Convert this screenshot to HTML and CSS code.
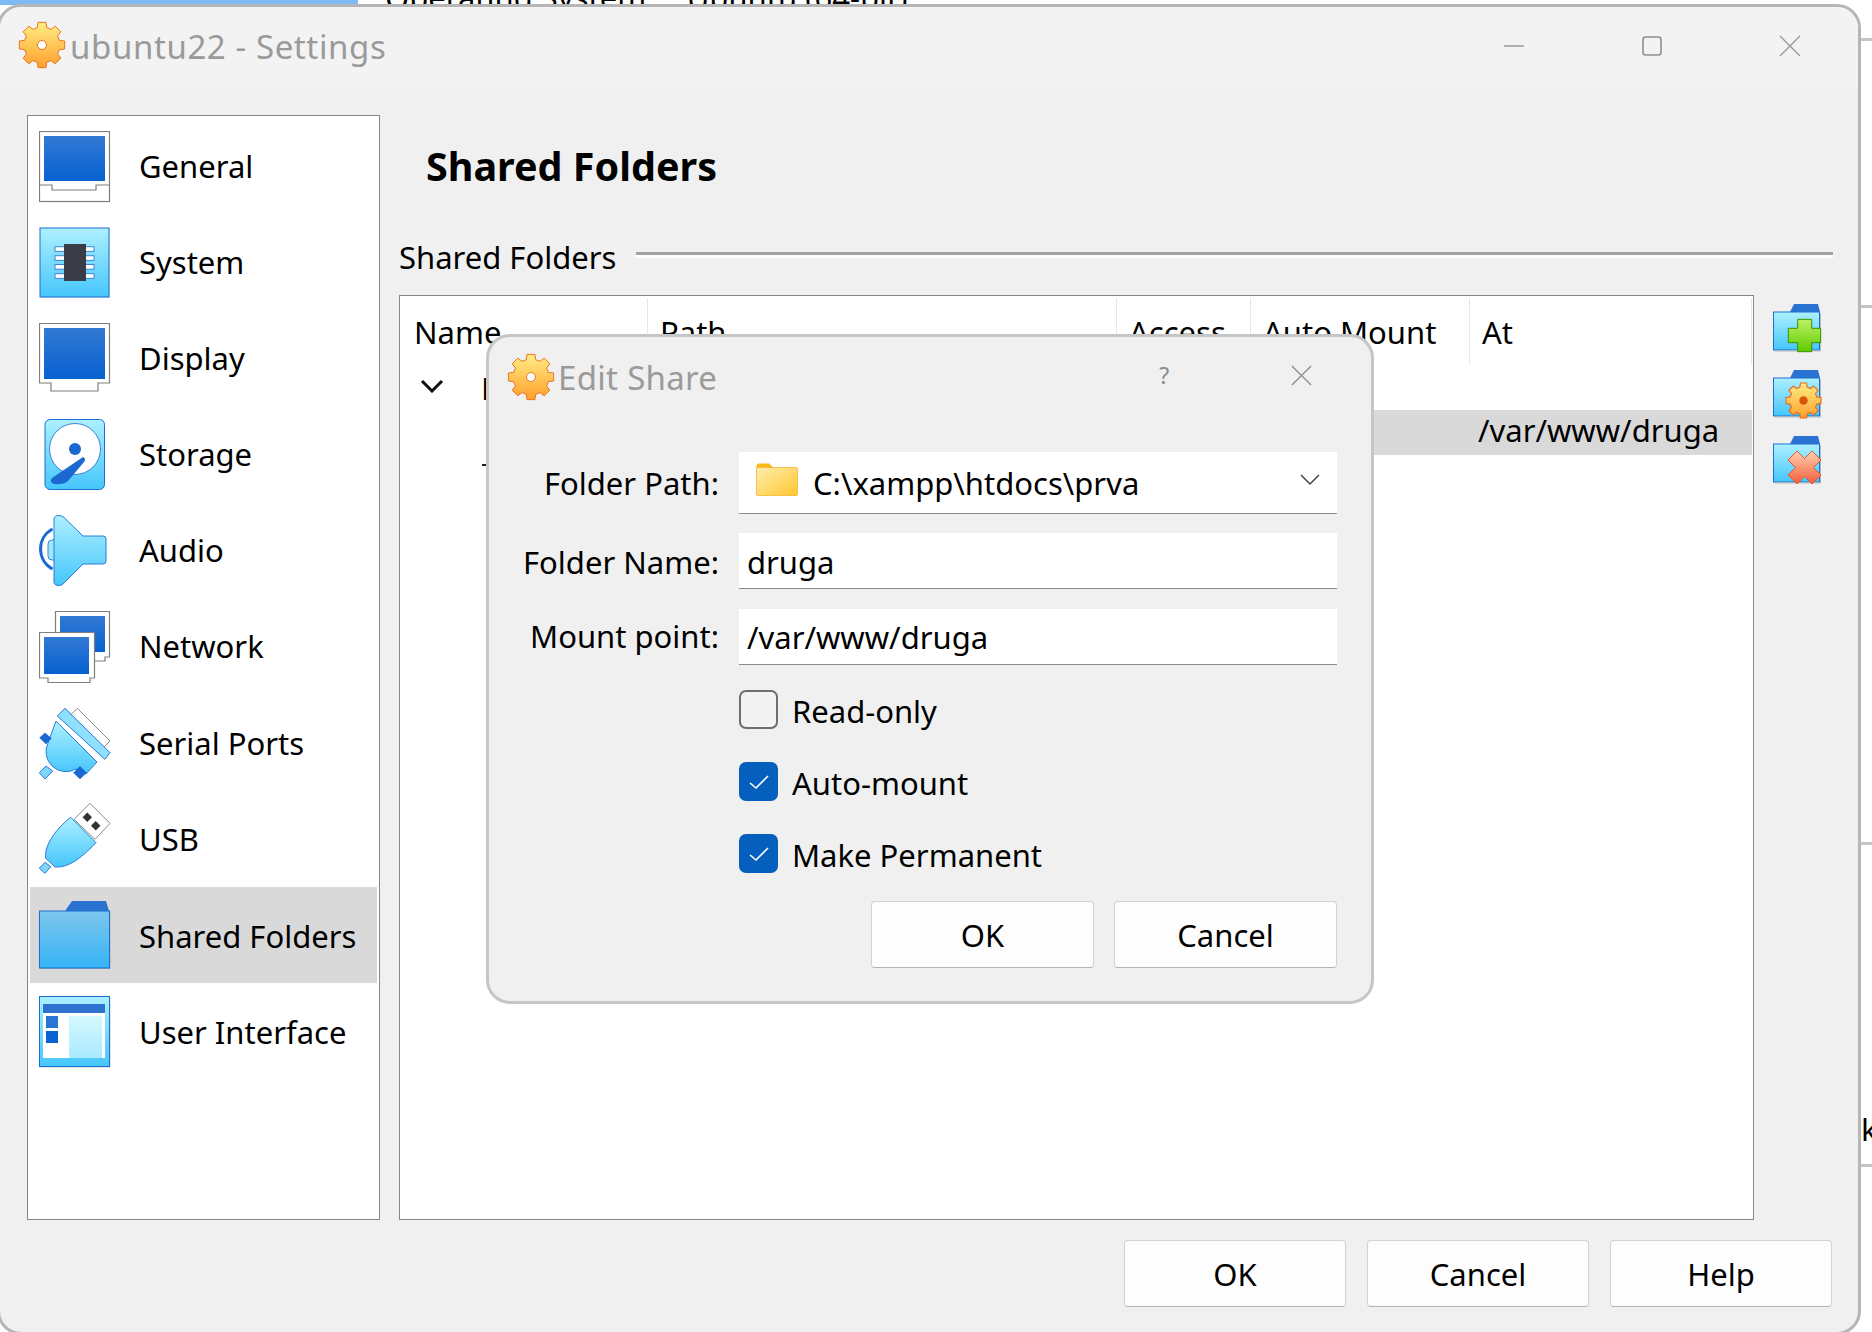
FILE: index.html
```html
<!DOCTYPE html>
<html lang="en">
<head>
<meta charset="utf-8">
<title>ubuntu22 - Settings</title>
<link rel="stylesheet" href="styles.css">
</head>
<body>
<svg class="defs" width="0" height="0" aria-hidden="true">
  <defs>
    <linearGradient id="gBlue" x1="0" y1="0" x2="0" y2="1"><stop offset="0" stop-color="#3279d4"/><stop offset="1" stop-color="#0761d1"/></linearGradient>
    <linearGradient id="gSky" x1="0" y1="0" x2="0" y2="1"><stop offset="0" stop-color="#adf0ff"/><stop offset="1" stop-color="#45c6fb"/></linearGradient>
    <linearGradient id="gFolder" x1="0" y1="0" x2="0" y2="1"><stop offset="0" stop-color="#7cc6ec"/><stop offset="1" stop-color="#36b4f6"/></linearGradient>
    <linearGradient id="gPane" x1="0" y1="0" x2="0" y2="1"><stop offset="0" stop-color="#d6f8ff"/><stop offset="1" stop-color="#a8eaff"/></linearGradient>
    <linearGradient id="gGear" x1="0" y1="0" x2="0" y2="1"><stop offset="0" stop-color="#ffee85"/><stop offset="1" stop-color="#ff9f2c"/></linearGradient>
    <linearGradient id="gPlus" x1="0" y1="0" x2="0" y2="1"><stop offset="0" stop-color="#bdf265"/><stop offset="1" stop-color="#5ecb00"/></linearGradient>
    <linearGradient id="gCross" x1="0" y1="0" x2="0" y2="1"><stop offset="0" stop-color="#ffcfb0"/><stop offset="1" stop-color="#f25f3a"/></linearGradient>
    <linearGradient id="gYellow" x1="0" y1="0" x2="1" y2="1"><stop offset="0" stop-color="#feeeb0"/><stop offset="1" stop-color="#ffc62e"/></linearGradient>
    <polygon id="gearShape" points="19.34,6.61 20.01,1.35 27.99,1.35 28.66,6.61 33,8.41 37.19,5.16 42.84,10.81 39.59,15 41.39,19.34 46.65,20.01 46.65,27.99 41.39,28.66 39.59,33 42.84,37.19 37.19,42.84 33,39.59 28.66,41.39 27.99,46.65 20.01,46.65 19.34,41.39 15,39.59 10.81,42.84 5.16,37.19 8.41,33 6.61,28.66 1.35,27.99 1.35,20.01 6.61,19.34 8.41,15 5.16,10.81 10.81,5.16 15,8.41"/>
    <g id="toolFolder">
      <path d="M17 8 L21 0 H45 L47 8 Z" fill="#2b73d3"/>
      <rect x="0.5" y="8" width="46" height="38" fill="url(#gSky)" stroke="#1a6fd0"/>
      <path d="M47.5 9 V47 H1.5" fill="none" stroke="#b9b9b9"/>
    </g>
  </defs>
</svg>

<div class="desktop">
  <div class="behind-strip"></div>
  <div class="behind-text">Operating System:&nbsp;&nbsp;&nbsp;&nbsp;Ubuntu (64-bit)</div>
  <div class="behind-line behind-line-a"></div>
  <div class="behind-line behind-line-b"></div>
  <div class="behind-line behind-line-c"></div>
  <div class="behind-line behind-line-d"></div>
  <div class="behind-k">k</div>

  <section class="window">
    <header class="titlebar">
      <svg class="title-gear" viewBox="0 0 48 48"><use href="#gearShape" fill="url(#gGear)" stroke="#ea7420" stroke-width="1"/><circle cx="24" cy="24" r="4.5" fill="#fff" stroke="#ea7420"/></svg>
      <span class="title-text">ubuntu22 - Settings</span>
      <div class="win-controls">
        <svg class="win-btn" viewBox="0 0 22 22"><path d="M1 11 H21" stroke="#9a9a9a" stroke-width="1.4"/></svg>
        <svg class="win-btn" viewBox="0 0 22 22"><rect x="2" y="2" width="18" height="18" rx="2.5" fill="none" stroke="#8f8f8f" stroke-width="1.6"/></svg>
        <svg class="win-btn" viewBox="0 0 22 22"><path d="M1 1 L21 21 M21 1 L1 21" stroke="#9a9a9a" stroke-width="1.4"/></svg>
      </div>
    </header>

    <div class="win-body">
      <nav class="sidebar">
        <div class="nav-row">
          <svg class="nav-icon" viewBox="0 0 72 72"><rect x="0.5" y="0.5" width="70" height="70" fill="#fff" stroke="#7f7f7f" stroke-width="1.2"/><rect x="5" y="5" width="61" height="45" fill="url(#gBlue)"/><path d="M0.5 54 H13 V59 H57 V54 H70.5" fill="none" stroke="#7f7f7f" stroke-width="1.2"/></svg>
          <span>General</span>
        </div>
        <div class="nav-row">
          <svg class="nav-icon" viewBox="0 0 72 72"><rect x="1.5" y="1.5" width="69" height="69" fill="#c9c9c9"/><rect x="1" y="1" width="69" height="69" fill="url(#gSky)" stroke="#1a6fd0"/><g fill="#fff" stroke="#3f84d4"><rect x="16" y="19.7" width="39" height="4.7"/><rect x="16" y="28.7" width="39" height="4.7"/><rect x="16" y="37.5" width="39" height="4.7"/><rect x="16" y="46.7" width="39" height="4.7"/></g><rect x="25" y="17" width="22" height="37" fill="#3a3d47"/></svg>
          <span>System</span>
        </div>
        <div class="nav-row">
          <svg class="nav-icon" viewBox="0 0 72 72"><path d="M0.5 0.5 H70.5 V60 H59 V68 H12 V60 H0.5 Z" fill="#fff" stroke="#7f7f7f" stroke-width="1.2"/><rect x="5" y="5" width="61" height="51" fill="url(#gBlue)"/></svg>
          <span>Display</span>
        </div>
        <div class="nav-row">
          <svg class="nav-icon" viewBox="0 0 72 72"><rect x="6" y="0.5" width="59.5" height="70" rx="5" fill="url(#gSky)" stroke="#1a6fd0"/><circle cx="36" cy="30" r="25.5" fill="#fff" stroke="#3f84d4"/><circle cx="36" cy="30" r="6" fill="#1b69d0"/><path d="M44 38 Q47.500 40 45 43 L29 62 Q24 66 15 65 Q10 63 13 59 Z" fill="#1b69d0"/></svg>
          <span>Storage</span>
        </div>
        <div class="nav-row">
          <svg class="nav-icon" viewBox="0 0 72 72"><path d="M13.500 14 A22.700 22.700 0 0 0 13.500 54" fill="none" stroke="#1b69d0" stroke-width="3"/><rect x="9" y="25" width="10" height="20" rx="4" fill="#9fe6ff" stroke="#3f84d4"/><path d="M15 4 Q15 0.500 20 0.500 Q23 0.500 25 2.500 L44 21 H64 Q67 21 67 24 V46 Q67 49 64 49 H44 L25 68 Q23 70.500 20 70.500 Q15 70.500 15 67 Z" fill="url(#gSky)" stroke="#2a7ad6"/></svg>
          <span>Audio</span>
        </div>
        <div class="nav-row">
          <svg class="nav-icon" viewBox="0 0 72 72"><path d="M16.500 0.500 H70.500 V46 H66 V50 H16.500 Z" fill="#fff" stroke="#7f7f7f" stroke-width="1.2"/><rect x="21" y="5" width="45" height="36" fill="url(#gBlue)"/><path d="M0.500 21.500 H55.500 V67 H51 V71.500 H9 V67 H0.500 Z" fill="#fff" stroke="#7f7f7f" stroke-width="1.2"/><rect x="5" y="26" width="45" height="37" fill="url(#gBlue)"/></svg>
          <span>Network</span>
        </div>
        <div class="nav-row nav-row-late">
          <svg class="nav-icon" viewBox="0 0 72 72"><path d="M38.300 1.300 L71 34 L64.300 40.700 L31.700 8 Z" fill="#fff" stroke="#8a8a8a"/><path d="M0.300 65.700 L7 59 L13.700 64 L6 72 Z" fill="#7fd6fb" stroke="#2a7ad6"/><path d="M17 14 L58 55 L47 67 L37 62 A20 20 0 0 1 9 36 Z" fill="url(#gSky)" stroke="#2a7ad6"/><path d="M26 1.300 L71 45.700 L66 52.300 L18.300 9 Z" fill="#8fdffe" stroke="#2a7ad6"/><path d="M0.300 30.700 L6 25.700 L12.700 31.300 L7 37.300 Z" fill="#1b69d0"/><path d="M34.300 65.700 L41 59 L47.700 65.700 L41 72.300 Z" fill="#1b69d0"/></svg>
          <span>Serial Ports</span>
        </div>
        <div class="nav-row nav-row-late">
          <svg class="nav-icon" viewBox="0 0 72 72"><path d="M51 0.300 L71 20.300 L56 36.300 L35 16.300 Z" fill="#fff" stroke="#8a8a8a"/><path d="M48.300 9.500 L53 14.300 L48.300 19 L43.600 14.300 Z M56.700 18 L61.400 22.700 L56.700 27.400 L52 22.700 Z" fill="#333"/><path d="M0.300 65.300 L6 59.300 L11.700 63.700 L6 70.300 Z" fill="#7fd6fb" stroke="#2a7ad6"/><path d="M31.700 14.300 L57 39.700 C44 53 31 65 16 64 L6.700 55.300 C5 42 17 26 31.700 14.300 Z" fill="url(#gSky)" stroke="#2a7ad6"/></svg>
          <span>USB</span>
        </div>
        <div class="nav-row nav-row-active nav-row-last">
          <svg class="nav-icon nav-icon-down" viewBox="0 0 72 72"><path d="M26 10 L33 0 H67 L70 10 Z" fill="#2b73d3"/><rect x="1.500" y="11" width="70" height="57" fill="#b5b5b5"/><rect x="0.500" y="10" width="70" height="57" fill="url(#gFolder)" stroke="#1a6fd0"/></svg>
          <span>Shared Folders</span>
        </div>
        <div class="nav-row nav-row-last">
          <svg class="nav-icon nav-icon-down-slight" viewBox="0 0 72 72"><rect x="1.500" y="1.500" width="70" height="70" fill="#c9c9c9"/><rect x="0.500" y="0.500" width="70" height="70" fill="url(#gSky)" stroke="#1a6fd0"/><rect x="4" y="8" width="62" height="54" fill="#fff"/><rect x="4" y="8" width="62" height="9" fill="#2f73d0"/><rect x="7" y="20" width="12" height="12" fill="#2a74d3"/><rect x="7" y="35" width="12" height="12" fill="#0a62d1"/><rect x="30" y="20" width="33" height="42" fill="url(#gPane)"/></svg>
          <span>User Interface</span>
        </div>
      </nav>

      <main class="content">
        <h1 class="page-title">Shared Folders</h1>
        <div class="group-head">
          <span>Shared Folders</span>
          <div class="group-rule"></div>
        </div>
        <div class="table-row">
          <div class="table">
            <div class="thead">
              <div class="th th-name">Name</div>
              <div class="th th-path">Path</div>
              <div class="th th-access">Access</div>
              <div class="th th-auto">Auto Mount</div>
              <div class="th th-at">At</div>
            </div>
            <div class="tree-group">
              <svg class="chevron" viewBox="0 0 24 14"><path d="M2 2 L12 12 L22 2" fill="none" stroke="#111" stroke-width="3"/></svg>
              <span>Machine Folders</span>
            </div>
            <div class="tree-item"><span>/var/www/druga</span></div>
            <div class="tree-dash"></div>
          </div>
          <div class="tools">
            <svg class="tool" viewBox="0 0 50 50"><use href="#toolFolder"/><path d="M24.700 15.300 H38.700 V24.300 H47.700 V38.700 H38.700 V47.700 H24.700 V38.700 H15.300 V24.300 H24.700 Z" fill="url(#gPlus)" stroke="#3a8f00"/></svg>
            <svg class="tool" viewBox="0 0 50 50"><use href="#toolFolder"/><svg x="12" y="12" width="37" height="37" viewBox="0 0 48 48"><use href="#gearShape" fill="url(#gGear)" stroke="#ea6a1a" stroke-width="1.500"/><circle cx="24" cy="24" r="5.500" fill="#d9560f"/></svg></svg>
            <svg class="tool" viewBox="0 0 50 50"><use href="#toolFolder"/><path d="M24 15 L31.500 22.500 L39 15 L48 24 L40.500 31.500 L48 39 L39 48 L31.500 40.500 L24 48 L15 39 L22.500 31.500 L15 24 Z" fill="url(#gCross)" stroke="#e8552a"/></svg>
          </div>
        </div>
      </main>
    </div>

    <footer class="win-footer">
      <button class="btn" type="button">OK</button>
      <button class="btn" type="button">Cancel</button>
      <button class="btn" type="button">Help</button>
    </footer>
  </section>

  <section class="dialog">
    <header class="dlg-title">
      <svg class="dlg-gear" viewBox="0 0 48 48"><use href="#gearShape" fill="url(#gGear)" stroke="#ea7420" stroke-width="1"/><circle cx="24" cy="24" r="4.500" fill="#fff" stroke="#ea7420"/></svg>
      <span class="dlg-title-text">Edit Share</span>
      <span class="dlg-help">?</span>
      <svg class="dlg-close" viewBox="0 0 22 22"><path d="M1 1 L21 21 M21 1 L1 21" stroke="#8c8c8c" stroke-width="1.400"/></svg>
    </header>
    <div class="form">
      <label class="form-label form-label-combo">Folder Path:</label>
      <div class="field field-combo">
        <svg class="combo-folder" viewBox="0 0 42 33"><path d="M0.500 4 Q0.500 0.500 3 0.500 H13 L17 4 V10 H0.500 Z" fill="#f9b916"/><rect x="0.500" y="4.500" width="41" height="28" rx="1.500" fill="url(#gYellow)" stroke="#f2b632" stroke-width="0.800"/></svg>
        <span class="combo-text">C:\xampp\htdocs\prva</span>
        <svg class="combo-arrow" viewBox="0 0 20 12"><path d="M1 1 L10 10 L19 1" fill="none" stroke="#444" stroke-width="1.500"/></svg>
      </div>
      <label class="form-label form-label-name">Folder Name:</label>
      <div class="field field-name">druga</div>
      <label class="form-label form-label-mount">Mount point:</label>
      <div class="field field-mount">/var/www/druga</div>
      <div class="checks">
        <div class="check-row"><span class="box"></span><span class="check-label">Read-only</span></div>
        <div class="check-row"><span class="box box-on"><svg viewBox="0 0 20 16"><path d="M1 9 L7 14 L19 2" fill="none" stroke="#fff" stroke-width="1.600"/></svg></span><span class="check-label">Auto-mount</span></div>
        <div class="check-row"><span class="box box-on"><svg viewBox="0 0 20 16"><path d="M1 9 L7 14 L19 2" fill="none" stroke="#fff" stroke-width="1.600"/></svg></span><span class="check-label">Make Permanent</span></div>
      </div>
      <div class="dlg-buttons">
        <button class="btn btn-dlg" type="button">OK</button>
        <button class="btn btn-dlg" type="button">Cancel</button>
      </div>
    </div>
  </section>
</div>
</body>
</html>
```
FILE: styles.css
```css
* { box-sizing: border-box; }
html, body { margin: 0; padding: 0; }
body { width: 1872px; height: 1332px; overflow: hidden; font-family: "Noto Sans", "Open Sans", sans-serif; font-size: 31px; color: #000; }
.defs { position: absolute; }
.desktop { position: relative; width: 1872px; height: 1332px; overflow: hidden; background: #fff; }

.behind-strip { position: absolute; left: 0; top: 0; width: 358px; height: 5px; background: #7fbbf2; }
.behind-text { position: absolute; left: 385px; top: -23px; line-height: 40px; white-space: nowrap; }
.behind-line { position: absolute; left: 1860px; width: 12px; height: 3px; background: #c4c4c4; }
.behind-line-a { top: 38px; }
.behind-line-b { top: 305px; }
.behind-line-c { top: 842px; }
.behind-line-d { top: 1164px; }
.behind-k { position: absolute; left: 1861px; top: 1108px; line-height: 42px; }

.window { position: absolute; left: -3px; top: 4px; width: 1864px; height: 1331px; background: #f0f0f0; border: 3px solid #b6b6b6; border-radius: 24px; display: flex; flex-direction: column; overflow: hidden; }
.titlebar { height: 81px; flex: none; background: #f3f3f3; display: flex; align-items: center; padding: 0 0 2px 18px; }
.title-gear { width: 48px; height: 48px; flex: none; margin-top: -4px; }
.title-text { margin-left: 4px; color: #9a9a9a; font-size: 33px; letter-spacing: 0.6px; white-space: nowrap; }
.win-controls { margin-left: auto; display: flex; gap: 116px; padding-right: 57px; margin-top: -2px; }
.win-btn { width: 22px; height: 22px; }

.win-body { display: flex; flex: none; height: 1132px; padding: 27px 0 0 27px; }
.sidebar { width: 353px; height: 1105px; flex: none; background: #fff; border: 1px solid #868686; padding: 3px 2px; }
.nav-row { height: 96px; display: flex; align-items: center; padding-left: 9px; gap: 28px; white-space: nowrap; }
.nav-row span { margin-top: -2px; }
.nav-row-late span { margin-top: 0; }
.nav-row-last span { margin-top: 2px; }
.nav-row-active { background: #d9d9d9; }
.nav-icon { width: 72px; height: 72px; flex: none; }
.nav-icon-down { margin-top: 4px; }
.nav-icon-down-slight { margin-top: 2px; }

.content { width: 1434px; margin-left: 19px; flex: none; }
.page-title { margin: 0; height: 104px; padding: 0 0 2px 27px; display: flex; align-items: center; font-size: 39.5px; font-weight: 700; }
.group-head { height: 76px; display: flex; align-items: flex-start; white-space: nowrap; padding-top: 17px; }
.group-head span { line-height: 42px; }
.group-rule { flex: 1; margin: 16px 0 0 20px; height: 6px; border-top: 3px solid #a3a3a3; border-bottom: 3px solid #fff; }
.table-row { display: flex; }
.table { width: 1355px; height: 925px; flex: none; background: #fff; border: 1px solid #868686; padding: 2px 1px 0; }
.thead { display: flex; height: 67px; }
.th { height: 100%; padding: 13px 0 0 12px; border-right: 1px solid #e6e6e6; line-height: 42px; white-space: nowrap; }
.th-name { width: 247px; padding-left: 13px; }
.th-path { width: 469px; }
.th-access { width: 134px; }
.th-auto { width: 219px; }
.th-at { flex: 1; padding-left: 12px; }
.tree-group { height: 45px; display: flex; align-items: center; padding-left: 19px; gap: 37px; white-space: nowrap; }
.chevron { width: 24px; height: 14px; flex: none; margin-top: -4px; }
.tree-item { height: 45px; margin-left: 600px; background: #d9d9d9; padding-left: 477px; line-height: 41px; }
.tree-dash { width: 8px; height: 2px; margin: 9px 0 0 81px; background: #222; }
.tools { display: flex; flex-direction: column; gap: 16px; margin: 9px 0 0 19px; }
.tool { width: 50px; height: 50px; flex: none; overflow: visible; }

.win-footer { display: flex; justify-content: flex-end; gap: 21px; margin-top: 20px; padding-right: 26px; }
.btn { width: 222px; height: 67px; padding: 0; background: #fdfdfd; border: 1px solid #d2d2d2; border-bottom-color: #b4b4b4; border-radius: 4px; font: inherit; color: #000; }

.dialog { position: absolute; left: 486px; top: 334px; width: 888px; height: 670px; background: #f0f0f0; border: 3px solid #c6c6c6; border-radius: 24px; }
.dlg-title { height: 80px; display: flex; align-items: center; padding-left: 18px; }
.dlg-gear { width: 48px; height: 48px; flex: none; }
.dlg-title-text { margin-left: 3px; color: #9a9a9a; font-size: 33px; letter-spacing: 0.3px; white-space: nowrap; }
.dlg-help { margin-left: 442px; width: 12px; color: #8c8c8c; font-size: 23px; margin-top: -5px; }
.dlg-close { width: 21px; height: 21px; margin-left: 120px; margin-top: -4px; }
.form { display: grid; grid-template-columns: 230px 598px; grid-template-rows: 81px 76px auto auto auto; column-gap: 20px; padding-top: 35px; align-items: start; }
.form-label { text-align: right; white-space: nowrap; }
.form-label-combo { line-height: 62px; }
.form-label-name { line-height: 58px; }
.form-label-mount { line-height: 55px; }
.field { background: #fff; border-bottom: 1px solid #8a8a8a; display: flex; align-items: center; padding-left: 8px; white-space: nowrap; }
.field-combo { height: 62px; padding-left: 17px; }
.field-name { height: 56px; padding-top: 2px; }
.field-mount { height: 56px; }
.combo-folder { width: 42px; height: 33px; flex: none; margin-top: -6px; }
.combo-text { margin-left: 15px; }
.combo-arrow { width: 20px; height: 12px; margin-left: auto; margin-right: 17px; margin-top: -6px; }
.checks { grid-column: 2; margin-top: 25px; display: flex; flex-direction: column; gap: 33px; }
.check-row { height: 39px; display: flex; align-items: center; gap: 14px; white-space: nowrap; }
.check-label { margin-top: 3px; }
.box { width: 39px; height: 39px; flex: none; border: 2px solid #6e6e6e; border-radius: 7px; background: #f3f3f3; display: flex; align-items: center; justify-content: center; }
.box-on { border: 0; background: #0560bd; }
.box-on svg { width: 20px; height: 16px; }
.dlg-buttons { grid-column: 2; display: flex; justify-content: flex-end; gap: 20px; margin-top: 28px; }
.btn-dlg { width: 223px; height: 67px; }
```
